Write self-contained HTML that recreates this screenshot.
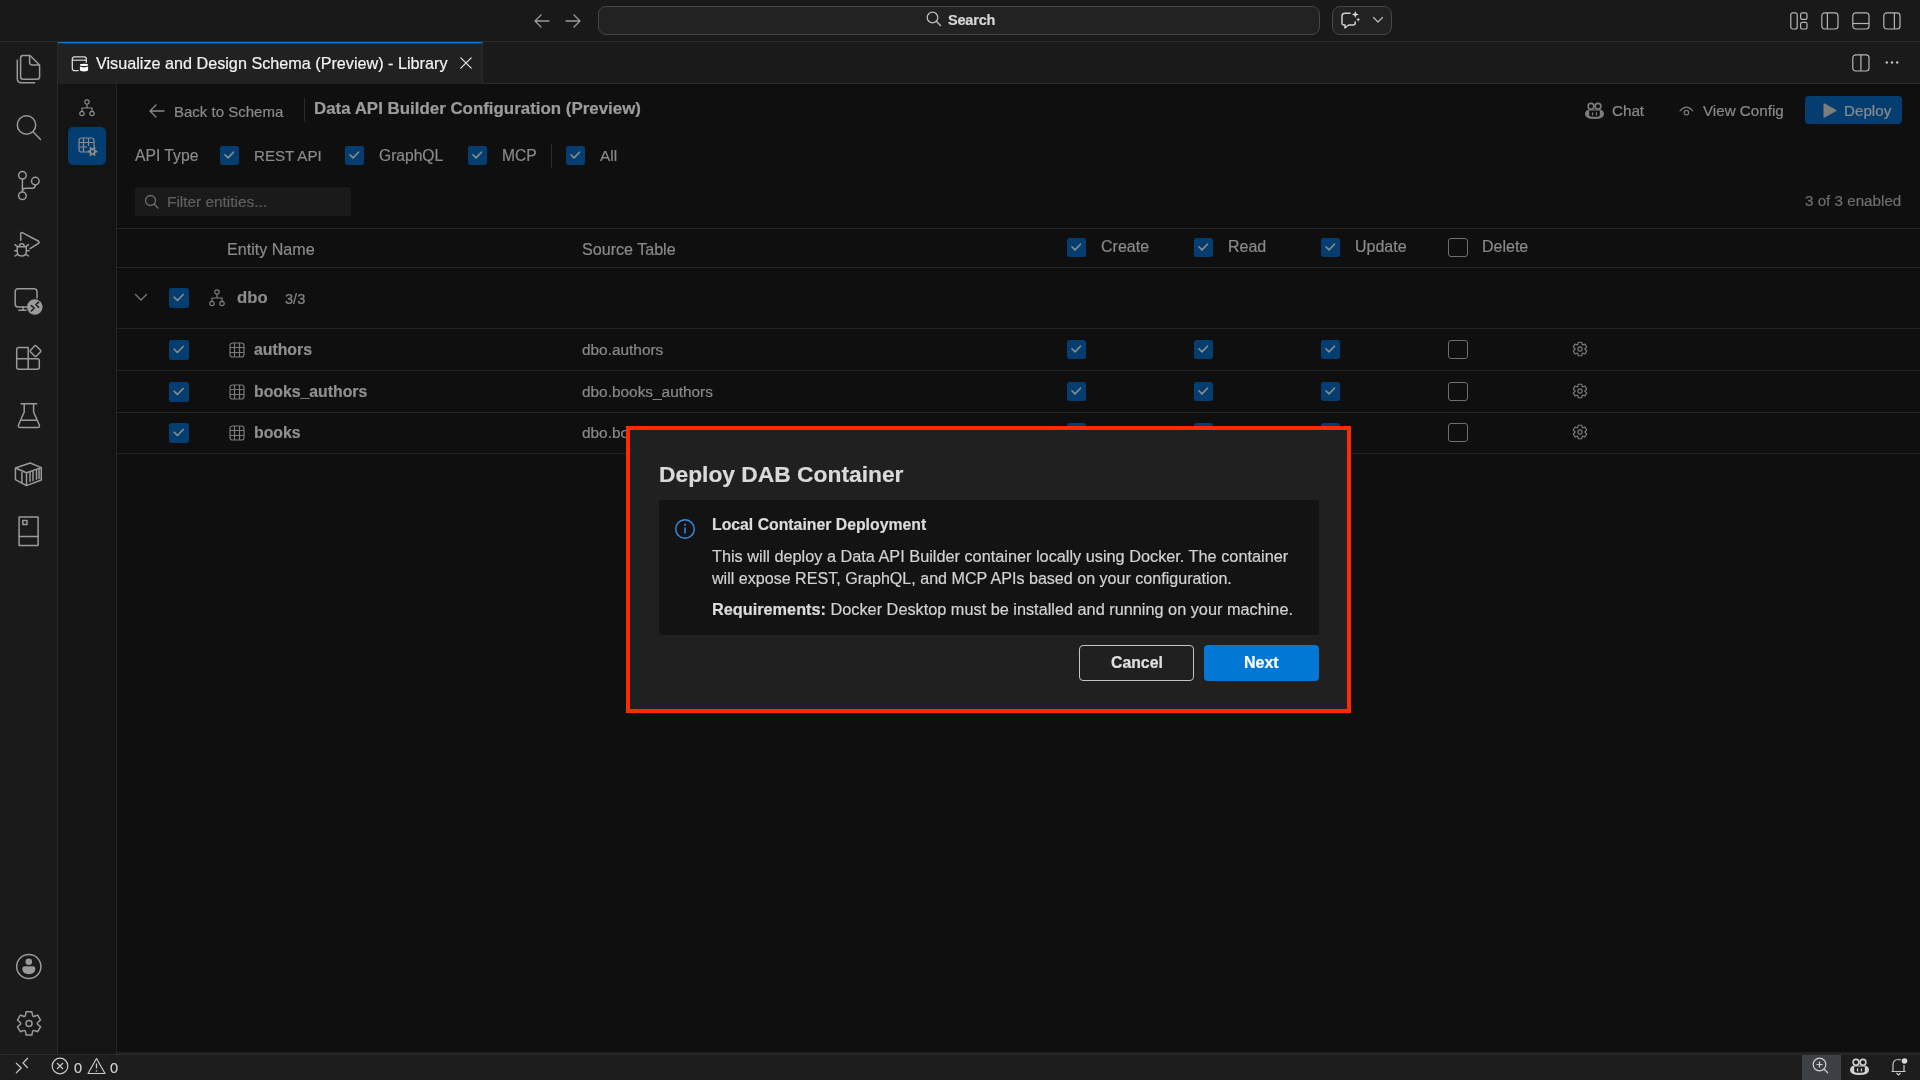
<!DOCTYPE html>
<html><head><meta charset="utf-8">
<style>
*{box-sizing:border-box;margin:0;padding:0}
html,body{width:1920px;height:1080px;overflow:hidden;background:#222222;font-family:"Liberation Sans",sans-serif}
.a{position:absolute}
svg{position:absolute;overflow:visible}
.t{position:absolute;white-space:nowrap;line-height:1;will-change:transform;-webkit-text-stroke:0.2px currentColor}
#title{left:0;top:0;width:1920px;height:42px;background:#191919;border-bottom:1px solid #2a2a2a}
#act{left:0;top:42px;width:58px;height:1012px;background:#1a1a1a;border-right:1px solid #2a2a2a}
#tabs{left:58px;top:42px;width:1862px;height:42px;background:#1a1a1a;border-bottom:1px solid #2a2a2a}
#tab{left:58px;top:42px;width:425px;height:42px;background:#212121;border-top:1px solid #0a78d4;border-right:1px solid #2a2a2a;box-shadow:inset 0 1px 0 rgba(10,120,212,0.35)}
#side{left:58px;top:84px;width:59px;height:970px;background:#141414;border-right:1px solid #262626}
#main{left:117px;top:84px;width:1803px;height:968px;background:#0f0f0f}
#status{left:0;top:1054px;width:1920px;height:26px;background:#1d1d1d;border-top:1px solid #2a2a2a}
.cb{position:absolute;width:19px;height:19px;border-radius:2.5px;background:#043d70}
.cb svg{left:0;top:0}
.cbe{position:absolute;width:20px;height:19px;border-radius:3px;border:1px solid #6e6e6e}
.hl{position:absolute;left:117px;width:1803px;height:1px;background:#242424}
.g{color:#8a8a8a}
</style></head><body>
<div id="title" class="a"></div>
<div id="act" class="a"></div>
<div id="tabs" class="a"></div>
<div id="tab" class="a"></div>
<div id="side" class="a"></div>
<div id="main" class="a"></div>
<div id="status" class="a"></div>
<svg style="left:534px;top:13px;" width="16" height="16" viewBox="0 0 16 16"><path d="M1 8 H15 M7 2 L1 8 L7 14" fill="none" stroke="#9a9a9a" stroke-width="1.3" stroke-linecap="round" stroke-linejoin="round"/></svg>
<svg style="left:565px;top:13px;" width="16" height="16" viewBox="0 0 16 16"><path d="M15 8 H1 M9 2 L15 8 L9 14" fill="none" stroke="#9a9a9a" stroke-width="1.3" stroke-linecap="round" stroke-linejoin="round"/></svg>
<div class="a" style="left:598px;top:6px;width:722px;height:29px;border:1px solid #464646;border-radius:8px;background:#222222"></div>
<svg style="left:926px;top:11px;" width="16" height="16" viewBox="0 0 16 16"><circle cx="6.5" cy="6.5" r="5.3" fill="none" stroke="#bdbdbd" stroke-width="1.3"/><path d="M10.3 10.3 L14.5 14.5" stroke="#bdbdbd" stroke-width="1.4" stroke-linecap="round"/></svg>
<div class="t" style="left:948px;top:12.93px;font-size:14.5px;color:#d6d6d6;font-weight:bold;letter-spacing:-0.2px;">Search</div>
<div class="a" style="left:1332px;top:6px;width:60px;height:29px;border:1px solid #464646;border-radius:8px;background:#222222"></div>
<svg style="left:1340px;top:10px;" width="22" height="20" viewBox="0 0 22 20"><path d="M10.5 3.2 H5 Q2 3.2 2 6.2 V13 Q2 15 4 15 H5 V18 L8.6 15 H13 Q15.2 15 15.2 13 V11.5" fill="none" stroke="#cfcfcf" stroke-width="1.5" stroke-linejoin="round"/><path d="M15.3 1 L16.2 3.6 L18.8 4.5 L16.2 5.4 L15.3 8 L14.4 5.4 L11.8 4.5 L14.4 3.6Z M18.2 7.5 L18.8 9 L20.3 9.6 L18.8 10.2 L18.2 11.7 L17.6 10.2 L16.1 9.6 L17.6 9Z" fill="#dcdcdc"/></svg>
<svg style="left:1372px;top:16px;" width="12" height="8" viewBox="0 0 12 8"><path d="M1.5 1.5 L6 6 L10.5 1.5" fill="none" stroke="#bdbdbd" stroke-width="1.2" stroke-linecap="round" stroke-linejoin="round"/></svg>
<svg style="left:1790px;top:12px;" width="18" height="18" viewBox="0 0 18 18"><rect x="0.8" y="0.8" width="6.4" height="16.2" rx="2" fill="none" stroke="#b5b5b5" stroke-width="1.2"/><rect x="10.6" y="0.8" width="6.4" height="6.6" rx="1.6" fill="none" stroke="#b5b5b5" stroke-width="1.2"/><rect x="10.6" y="10.4" width="6.4" height="6.6" rx="1.6" fill="none" stroke="#b5b5b5" stroke-width="1.2"/></svg>
<svg style="left:1821px;top:12px;" width="18" height="18" viewBox="0 0 18 18"><rect x="0.8" y="0.8" width="16.2" height="16.2" rx="3" fill="none" stroke="#b5b5b5" stroke-width="1.2"/><path d="M6.4 1 V17" fill="none" stroke="#b5b5b5" stroke-width="1.2"/></svg>
<svg style="left:1852px;top:12px;" width="18" height="18" viewBox="0 0 18 18"><rect x="0.8" y="0.8" width="16.2" height="16.2" rx="3" fill="none" stroke="#b5b5b5" stroke-width="1.2"/><path d="M1 11.5 H17" fill="none" stroke="#b5b5b5" stroke-width="1.2"/></svg>
<svg style="left:1883px;top:12px;" width="18" height="18" viewBox="0 0 18 18"><rect x="0.8" y="0.8" width="16.2" height="16.2" rx="3" fill="none" stroke="#b5b5b5" stroke-width="1.2"/><path d="M11.4 1 V17" fill="none" stroke="#b5b5b5" stroke-width="1.2"/></svg>
<svg style="left:71px;top:56px;" width="19" height="18" viewBox="0 0 19 18"><rect x="1.3" y="0.8" width="14" height="13.8" rx="2.2" fill="none" stroke="#dcdcdc" stroke-width="1.3"/><path d="M1.6 4.2 H15" stroke="#dcdcdc" stroke-width="1.2"/><rect x="7.6" y="6.8" width="11" height="11" fill="#212121"/><ellipse cx="13" cy="8.9" rx="4.1" ry="1.1" fill="#ffffff"/><path d="M8.9 10.6 V14.6 Q13 16.6 17.1 14.6 V10.6 Q13 12.2 8.9 10.6Z" fill="#ffffff"/></svg>
<div class="t" style="left:96px;top:55.49px;font-size:16.2px;color:#f2f2f2;">Visualize and Design Schema (Preview) - Library</div>
<svg style="left:459.5px;top:56.5px;" width="12" height="12" viewBox="0 0 12 12"><path d="M0.8 0.8 L11.2 11.2 M11.2 0.8 L0.8 11.2" stroke="#e8e8e8" stroke-width="1.2" stroke-linecap="round"/></svg>
<svg style="left:1852px;top:54px;" width="18" height="18" viewBox="0 0 18 18"><rect x="0.8" y="0.8" width="16.2" height="16.2" rx="3" fill="none" stroke="#b5b5b5" stroke-width="1.2"/><path d="M8.9 1 V17" fill="none" stroke="#b5b5b5" stroke-width="1.2"/></svg>
<svg style="left:1885px;top:60px;" width="15" height="5" viewBox="0 0 15 5"><circle cx="1.8" cy="2.5" r="1.2" fill="#c0c0c0"/><circle cx="7" cy="2.5" r="1.2" fill="#c0c0c0"/><circle cx="12.2" cy="2.5" r="1.2" fill="#c0c0c0"/></svg>
<svg style="left:15px;top:54px;" width="26" height="31" viewBox="0 0 26 31"><path d="M5.6 4 Q5.6 1.5 8.1 1.5 H15 L24.6 11 V22.8 Q24.6 25.3 22.1 25.3 H8.1 Q5.6 25.3 5.6 22.8 Z" fill="none" stroke="#9a9a9a" stroke-width="1.5" stroke-linecap="round" stroke-linejoin="round"/><path d="M14.6 1.8 V8.6 Q14.6 10.9 16.9 10.9 H24.3" fill="none" stroke="#9a9a9a" stroke-width="1.5" stroke-linecap="round" stroke-linejoin="round"/><path d="M2.3 6.3 V24.5 Q2.3 28.8 6.6 28.8 H19.6" fill="none" stroke="#9a9a9a" stroke-width="1.5" stroke-linecap="round" stroke-linejoin="round"/></svg>
<svg style="left:15px;top:114px;" width="28" height="28" viewBox="0 0 28 28"><circle cx="11.5" cy="11" r="9.2" fill="none" stroke="#9a9a9a" stroke-width="1.5" stroke-linecap="round" stroke-linejoin="round"/><path d="M18 17.8 L25.5 25.5" fill="none" stroke="#9a9a9a" stroke-width="1.5" stroke-linecap="round" stroke-linejoin="round"/></svg>
<svg style="left:16px;top:170px;" width="25" height="32" viewBox="0 0 25 32"><circle cx="6.4" cy="5.3" r="3.8" fill="none" stroke="#9a9a9a" stroke-width="1.5" stroke-linecap="round" stroke-linejoin="round"/><circle cx="6.4" cy="25.8" r="3.8" fill="none" stroke="#9a9a9a" stroke-width="1.5" stroke-linecap="round" stroke-linejoin="round"/><circle cx="19.3" cy="11.1" r="3.8" fill="none" stroke="#9a9a9a" stroke-width="1.5" stroke-linecap="round" stroke-linejoin="round"/><path d="M6.4 9.1 V22 M6.4 21.5 Q6.4 18.2 10 18.2 H16.3 Q19.3 18.2 19.3 14.9" fill="none" stroke="#9a9a9a" stroke-width="1.5" stroke-linecap="round" stroke-linejoin="round"/></svg>
<svg style="left:13px;top:231px;" width="28" height="28" viewBox="0 0 28 28"><path d="M7.7 9.3 V3 Q7.7 0.8 9.7 1.8 L25.2 10 Q27.2 11.3 25.2 12.5 L17 17.7" fill="none" stroke="#9a9a9a" stroke-width="1.5" stroke-linecap="round" stroke-linejoin="round"/><path d="M6.3 15.3 Q6.3 12.7 8.75 12.7 Q11.3 12.7 11.3 15.3 M4.2 15.8 H13.3 V20.5 Q13.3 25 8.75 25 Q4.2 25 4.2 20.5 Z M2 13.6 L4.5 15.6 M15.5 13.6 L13 15.6 M1.7 19.7 H4.2 M13.3 19.7 H16 M2 25 L4.5 23.3 M15.5 25 L13 23.3" fill="none" stroke="#9a9a9a" stroke-width="1.5" stroke-linecap="round" stroke-linejoin="round"/></svg>
<svg style="left:13px;top:287px;" width="32" height="29" viewBox="0 0 32 29"><path d="M14 20 H5 Q2.2 20 2.2 17 V4.8 Q2.2 1.8 5 1.8 H21 Q24 1.8 24 4.8 V11" fill="none" stroke="#9a9a9a" stroke-width="1.5" stroke-linecap="round" stroke-linejoin="round"/><path d="M10 20 V23.3 M5.8 23.3 H13" fill="none" stroke="#9a9a9a" stroke-width="1.5" stroke-linecap="round" stroke-linejoin="round"/><circle cx="21.8" cy="20" r="7.8" fill="#9a9a9a"/><path d="M18.3 18.7 L21.3 21 L18.3 24 M25.7 15.2 L22.8 17.5 L25.7 20.3" fill="none" stroke="#1b1b1b" stroke-width="1.5" stroke-linecap="round" stroke-linejoin="round"/></svg>
<svg style="left:15px;top:344px;" width="28" height="28" viewBox="0 0 28 28"><path d="M1.7 14.7 V5.6 Q1.7 3.6 3.7 3.6 H13.2 V25.3 H3.7 Q1.7 25.3 1.7 23.3 Z M1.7 14.7 H22.3 Q24.3 14.7 24.3 16.7 V23.3 Q24.3 25.3 22.3 25.3 H13.2" fill="none" stroke="#9a9a9a" stroke-width="1.5" stroke-linecap="round" stroke-linejoin="round"/><path d="M19.9 1.6 Q20.6 1.4 21.2 2 L25.6 6.4 Q26.2 7.1 25.6 7.8 L21.2 12.2 Q20.5 12.9 19.8 12.2 L15.4 7.8 Q14.8 7.1 15.4 6.4 Z" fill="none" stroke="#9a9a9a" stroke-width="1.5" stroke-linecap="round" stroke-linejoin="round"/></svg>
<svg style="left:16px;top:401px;" width="25" height="29" viewBox="0 0 25 29"><path d="M5.1 2.8 H20.7 M8.2 2.8 V11 L2.6 23.8 Q1.6 26.6 4.4 26.6 H21.4 Q24.2 26.6 23.2 23.8 L17.6 11 V2.8" fill="none" stroke="#9a9a9a" stroke-width="1.5" stroke-linecap="round" stroke-linejoin="round"/><path d="M4.9 19.3 H20.9" fill="none" stroke="#9a9a9a" stroke-width="1.5" stroke-linecap="round" stroke-linejoin="round"/></svg>
<svg style="left:13px;top:460px;" width="31" height="29" viewBox="0 0 31 29"><path d="M2.4 8 L17.2 3 L28.3 7.6 V20 L13.5 25.6 L2.4 19.6 Z M2.4 8 L13.5 12.8 L28.3 7.6 M13.5 12.8 V25.6 M8.9 10.6 V22.8" fill="none" stroke="#9a9a9a" stroke-width="1.5" stroke-linecap="round" stroke-linejoin="round"/><path d="M17 12 V21.5 M20 11 V20.5 M23.5 9.8 V19.3 M26 9 V18.5" fill="none" stroke="#9a9a9a" stroke-width="1.5" stroke-linecap="round" stroke-linejoin="round"/></svg>
<svg style="left:17px;top:508px;" width="23" height="39" viewBox="0 0 23 39"><rect x="2.1" y="9" width="19" height="28.4" fill="none" stroke="#9a9a9a" stroke-width="1.5" stroke-linecap="round" stroke-linejoin="round"/><path d="M2.1 28.6 H21.1" fill="none" stroke="#9a9a9a" stroke-width="1.5" stroke-linecap="round" stroke-linejoin="round"/><rect x="5.8" y="12.4" width="4.2" height="4.1" fill="none" stroke="#9a9a9a" stroke-width="1.5" stroke-linecap="round" stroke-linejoin="round"/></svg>
<svg style="left:15px;top:953px;" width="27" height="27" viewBox="0 0 27 27"><circle cx="13.8" cy="13.5" r="12.1" fill="none" stroke="#9a9a9a" stroke-width="1.5" stroke-linecap="round" stroke-linejoin="round"/><circle cx="13.8" cy="8.7" r="3.3" fill="#9a9a9a"/><path d="M9.8 13.3 H17.8 Q20.3 13.3 20.3 15.5 Q20.3 21.2 13.8 21.2 Q7.3 21.2 7.3 15.5 Q7.3 13.3 9.8 13.3Z" fill="#9a9a9a"/></svg>
<svg style="left:15px;top:1010px;" width="28" height="28" viewBox="0 0 28 28"><path d="M10.62 4.42 L11.15 1.74 L16.85 1.74 L17.38 4.42 Q17.50 7.34 20.09 5.98 L22.67 5.10 L25.52 10.04 L23.47 11.84 Q21.00 13.40 23.47 14.96 L25.52 16.76 L22.67 21.70 L20.09 20.82 Q17.50 19.46 17.38 22.38 L16.85 25.06 L11.15 25.06 L10.62 22.38 Q10.50 19.46 7.91 20.82 L5.33 21.70 L2.48 16.76 L4.53 14.96 Q7.00 13.40 4.53 11.84 L2.48 10.04 L5.33 5.10 L7.91 5.98 Q10.50 7.34 10.62 4.42 Z" fill="none" stroke="#9a9a9a" stroke-width="1.5" stroke-linecap="round" stroke-linejoin="round"/><circle cx="14" cy="13.4" r="3.0" fill="none" stroke="#9a9a9a" stroke-width="1.5" stroke-linecap="round" stroke-linejoin="round"/></svg>
<svg style="left:79px;top:99px;" width="16" height="18" viewBox="0 0 16 18"><circle cx="8" cy="3" r="2.2" fill="none" stroke="#8a8a8a" stroke-width="1.2"/><circle cx="3" cy="14.5" r="2.2" fill="none" stroke="#8a8a8a" stroke-width="1.2"/><circle cx="13" cy="14.5" r="2.2" fill="none" stroke="#8a8a8a" stroke-width="1.2"/><path d="M8 5.2 V9 M3 12.3 V9 H13 V12.3" fill="none" stroke="#8a8a8a" stroke-width="1.2"/></svg>
<div class="a" style="left:68px;top:127px;width:38px;height:38px;border-radius:5px;background:#043d70"></div>
<svg style="left:78px;top:137px;" width="20" height="20" viewBox="0 0 20 20"><rect x="1" y="1" width="15" height="14" rx="2.5" fill="none" stroke="#8c8c8c" stroke-width="1.2"/><path d="M1 5.5 H16 M1 10 H9 M5.5 1 V15 M10.5 1 V9" stroke="#8c8c8c" stroke-width="1.2" fill="none"/><path d="M17.75 13.50 L19.43 13.68 L19.43 15.32 L17.75 15.50 L16.99 16.81 L17.68 18.36 L16.25 19.18 L15.25 17.82 L13.75 17.82 L12.75 19.18 L11.32 18.36 L12.01 16.81 L11.25 15.50 L9.57 15.32 L9.57 13.68 L11.25 13.50 L12.01 12.19 L11.32 10.64 L12.75 9.82 L13.75 11.18 L15.25 11.18 L16.25 9.82 L17.68 10.64 L16.99 12.19 Z" fill="#8c8c8c"/><circle cx="14.5" cy="14.5" r="1.5" fill="#043d70"/></svg>
<svg style="left:149px;top:104px;" width="16" height="14" viewBox="0 0 16 14"><path d="M1 7 H15 M7 1 L1 7 L7 13" fill="none" stroke="#8a8a8a" stroke-width="1.3" stroke-linecap="round" stroke-linejoin="round"/></svg>
<div class="t" style="left:174px;top:104.10px;font-size:15px;color:#8a8a8a;">Back to Schema</div>
<div class="a" style="left:304px;top:98px;width:1px;height:24px;background:#2a2a2a;"></div>
<div class="t" style="left:314px;top:101.49px;font-size:16.9px;color:#9c9c9c;font-weight:bold;">Data API Builder Configuration (Preview)</div>
<svg style="left:1585px;top:102px;" width="19.0" height="17.0" viewBox="0 0 19 17"><circle cx="6" cy="4.3" r="2.9" fill="none" stroke="#7c7c7c" stroke-width="1.6"/><circle cx="13" cy="4.3" r="2.9" fill="none" stroke="#7c7c7c" stroke-width="1.6"/><path fill-rule="evenodd" d="M3.6 7.6 H15.4 Q19 8.6 19 12.3 Q19 17 9.5 17 Q0 17 0 12.3 Q0 8.6 3.6 7.6 Z M4.2 8.4 H14.8 V13.2 Q14.8 14.8 9.5 14.8 Q4.2 14.8 4.2 13.2 Z" fill="#7c7c7c"/><rect x="6.9" y="10.2" width="1.3" height="3.3" rx="0.6" fill="#7c7c7c"/><rect x="10.8" y="10.2" width="1.3" height="3.3" rx="0.6" fill="#7c7c7c"/></svg>
<div class="t" style="left:1612px;top:103.33px;font-size:15.2px;color:#8a8a8a;">Chat</div>
<svg style="left:1678px;top:105px;" width="17" height="11" viewBox="0 0 17 11"><path d="M2 5.8 Q8.4 -1.6 14.8 5.8" fill="none" stroke="#7a7a7a" stroke-width="1.15" stroke-linecap="round"/><circle cx="8.4" cy="7.6" r="2.3" fill="none" stroke="#7a7a7a" stroke-width="1.15"/></svg>
<div class="t" style="left:1703px;top:103.33px;font-size:15.2px;color:#8a8a8a;">View Config</div>
<div class="a" style="left:1805px;top:96px;width:97px;height:28px;border-radius:4px;background:#043d70"></div>
<svg style="left:1821px;top:102px;" width="16" height="17" viewBox="0 0 16 17"><path d="M2.5 2 Q2.5 0.8 3.8 1.5 L15 7.8 Q16 8.5 15 9.2 L3.8 15.5 Q2.5 16.2 2.5 15 Z" fill="#7d7d7d"/></svg>
<div class="t" style="left:1844px;top:103.33px;font-size:15.2px;color:#8a8a8a;">Deploy</div>
<div class="t" style="left:134.5px;top:147.51px;font-size:15.7px;color:#8a8a8a;">API Type</div>
<div class="cb" style="left:220px;top:146px;width:19px;height:19px"><svg width="19" height="19" viewBox="0 0 19 19"><path d="M4.9 8.8 L8 11.9 L13.5 6.2" fill="none" stroke="#8c8c8c" stroke-width="1.6" stroke-linecap="round" stroke-linejoin="round"/></svg></div>
<div class="t" style="left:254px;top:148.02px;font-size:15.1px;color:#8a8a8a;">REST API</div>
<div class="cb" style="left:345px;top:146px;width:19px;height:19px"><svg width="19" height="19" viewBox="0 0 19 19"><path d="M4.9 8.8 L8 11.9 L13.5 6.2" fill="none" stroke="#8c8c8c" stroke-width="1.6" stroke-linecap="round" stroke-linejoin="round"/></svg></div>
<div class="t" style="left:379px;top:147.59px;font-size:15.6px;color:#8a8a8a;">GraphQL</div>
<div class="cb" style="left:468px;top:146px;width:19px;height:19px"><svg width="19" height="19" viewBox="0 0 19 19"><path d="M4.9 8.8 L8 11.9 L13.5 6.2" fill="none" stroke="#8c8c8c" stroke-width="1.6" stroke-linecap="round" stroke-linejoin="round"/></svg></div>
<div class="t" style="left:502px;top:147.59px;font-size:15.6px;color:#8a8a8a;">MCP</div>
<div class="cb" style="left:566px;top:146px;width:19px;height:19px"><svg width="19" height="19" viewBox="0 0 19 19"><path d="M4.9 8.8 L8 11.9 L13.5 6.2" fill="none" stroke="#8c8c8c" stroke-width="1.6" stroke-linecap="round" stroke-linejoin="round"/></svg></div>
<div class="t" style="left:600px;top:147.76px;font-size:15.4px;color:#8a8a8a;">All</div>
<div class="a" style="left:551px;top:144px;width:1px;height:24px;background:#2a2a2a;"></div>
<div class="a" style="left:135px;top:187px;width:216px;height:29px;border-radius:2px;background:#1a1a1a"></div>
<svg style="left:144px;top:194px;" width="16" height="16" viewBox="0 0 16 16"><circle cx="6.5" cy="6.5" r="5" fill="none" stroke="#6a6a6a" stroke-width="1.3"/><path d="M10 10 L14 14" stroke="#6a6a6a" stroke-width="1.4" stroke-linecap="round"/></svg>
<div class="t" style="left:167px;top:194.16px;font-size:15.4px;color:#606060;">Filter entities...</div>
<div class="t" style="right:18.5px;top:193.03px;font-size:15.2px;color:#6e6e6e">3 of 3 enabled</div>
<div class="a" style="left:117px;top:228px;width:1803px;height:1px;background:#232323;"></div>
<div class="a" style="left:117px;top:267px;width:1803px;height:1px;background:#232323;"></div>
<div class="a" style="left:117px;top:328px;width:1803px;height:1px;background:#232323;"></div>
<div class="a" style="left:117px;top:370px;width:1803px;height:1px;background:#232323;"></div>
<div class="a" style="left:117px;top:412px;width:1803px;height:1px;background:#232323;"></div>
<div class="a" style="left:117px;top:453px;width:1803px;height:1px;background:#232323;"></div>
<div class="t" style="left:227px;top:241.07px;font-size:16.1px;color:#8a8a8a;">Entity Name</div>
<div class="t" style="left:582px;top:241.07px;font-size:16.1px;color:#8a8a8a;">Source Table</div>
<div class="cb" style="left:1067px;top:238px;width:19px;height:19px"><svg width="19" height="19" viewBox="0 0 19 19"><path d="M4.9 8.8 L8 11.9 L13.5 6.2" fill="none" stroke="#8c8c8c" stroke-width="1.6" stroke-linecap="round" stroke-linejoin="round"/></svg></div>
<div class="t" style="left:1101px;top:239.26px;font-size:16px;color:#8a8a8a;">Create</div>
<div class="cb" style="left:1194px;top:238px;width:19px;height:19px"><svg width="19" height="19" viewBox="0 0 19 19"><path d="M4.9 8.8 L8 11.9 L13.5 6.2" fill="none" stroke="#8c8c8c" stroke-width="1.6" stroke-linecap="round" stroke-linejoin="round"/></svg></div>
<div class="t" style="left:1228px;top:239.26px;font-size:16px;color:#8a8a8a;">Read</div>
<div class="cb" style="left:1321px;top:238px;width:19px;height:19px"><svg width="19" height="19" viewBox="0 0 19 19"><path d="M4.9 8.8 L8 11.9 L13.5 6.2" fill="none" stroke="#8c8c8c" stroke-width="1.6" stroke-linecap="round" stroke-linejoin="round"/></svg></div>
<div class="t" style="left:1355px;top:239.26px;font-size:16px;color:#8a8a8a;">Update</div>
<div class="cbe" style="left:1448px;top:238px"></div>
<div class="t" style="left:1482px;top:239.26px;font-size:16px;color:#8a8a8a;">Delete</div>
<svg style="left:134px;top:293px;" width="14" height="10" viewBox="0 0 14 10"><path d="M1.5 1.5 L7 7 L12.5 1.5" fill="none" stroke="#7a7a7a" stroke-width="1.3" stroke-linecap="round" stroke-linejoin="round"/></svg>
<div class="cb" style="left:169px;top:288px;width:20px;height:20px"><svg width="20" height="20" viewBox="0 0 19 19"><path d="M4.9 8.8 L8 11.9 L13.5 6.2" fill="none" stroke="#8c8c8c" stroke-width="1.6" stroke-linecap="round" stroke-linejoin="round"/></svg></div>
<svg style="left:209px;top:289px;" width="16" height="18" viewBox="0 0 16 18"><circle cx="8" cy="3" r="2.2" fill="none" stroke="#7e7e7e" stroke-width="1.2"/><circle cx="3" cy="14.5" r="2.2" fill="none" stroke="#7e7e7e" stroke-width="1.2"/><circle cx="13" cy="14.5" r="2.2" fill="none" stroke="#7e7e7e" stroke-width="1.2"/><path d="M8 5.2 V9 M3 12.3 V9 H13 V12.3" fill="none" stroke="#7e7e7e" stroke-width="1.2"/></svg>
<div class="t" style="left:237px;top:290.36px;font-size:16.7px;color:#8c8c8c;font-weight:bold;">dbo</div>
<div class="t" style="left:284.5px;top:292.14px;font-size:14.6px;color:#858585;">3/3</div>
<div class="cb" style="left:169px;top:340px;width:20px;height:20px"><svg width="20" height="20" viewBox="0 0 19 19"><path d="M4.9 8.8 L8 11.9 L13.5 6.2" fill="none" stroke="#8c8c8c" stroke-width="1.6" stroke-linecap="round" stroke-linejoin="round"/></svg></div>
<svg style="left:228.5px;top:342px;" width="16" height="16" viewBox="0 0 16 16"><rect x="1" y="1" width="14" height="14" rx="2.5" fill="none" stroke="#7a7a7a" stroke-width="1.2"/><path d="M1 5.5 H15 M1 10.5 H15 M5.5 1 V15 M10.5 1 V15" fill="none" stroke="#7a7a7a" stroke-width="1.2"/></svg>
<div class="t" style="left:253.5px;top:341.63px;font-size:15.8px;color:#909090;font-weight:bold;">authors</div>
<div class="t" style="left:582px;top:341.96px;font-size:15.4px;color:#8a8a8a;">dbo.authors</div>
<div class="cb" style="left:1067px;top:340px;width:19px;height:19px"><svg width="19" height="19" viewBox="0 0 19 19"><path d="M4.9 8.8 L8 11.9 L13.5 6.2" fill="none" stroke="#8c8c8c" stroke-width="1.6" stroke-linecap="round" stroke-linejoin="round"/></svg></div>
<div class="cb" style="left:1194px;top:340px;width:19px;height:19px"><svg width="19" height="19" viewBox="0 0 19 19"><path d="M4.9 8.8 L8 11.9 L13.5 6.2" fill="none" stroke="#8c8c8c" stroke-width="1.6" stroke-linecap="round" stroke-linejoin="round"/></svg></div>
<div class="cb" style="left:1321px;top:340px;width:19px;height:19px"><svg width="19" height="19" viewBox="0 0 19 19"><path d="M4.9 8.8 L8 11.9 L13.5 6.2" fill="none" stroke="#8c8c8c" stroke-width="1.6" stroke-linecap="round" stroke-linejoin="round"/></svg></div>
<div class="cbe" style="left:1448px;top:340px"></div>
<svg style="left:1572.2px;top:341.3px;" width="16" height="16" viewBox="0 0 16 16"><path d="M5.92 2.80 L6.27 1.22 L9.73 1.22 L10.08 2.80 Q10.00 4.54 11.47 3.60 L13.01 3.11 L14.74 6.11 L13.54 7.20 Q12.00 8.00 13.54 8.80 L14.74 9.89 L13.01 12.89 L11.47 12.40 Q10.00 11.46 10.08 13.20 L9.73 14.78 L6.27 14.78 L5.92 13.20 Q6.00 11.46 4.53 12.40 L2.99 12.89 L1.26 9.89 L2.46 8.80 Q4.00 8.00 2.46 7.20 L1.26 6.11 L2.99 3.11 L4.53 3.60 Q6.00 4.54 5.92 2.80 Z" fill="none" stroke="#7a7a7a" stroke-width="1.15" stroke-linejoin="round"/><circle cx="8" cy="8" r="2.1" fill="none" stroke="#7a7a7a" stroke-width="1.15"/></svg>
<div class="cb" style="left:169px;top:382px;width:20px;height:20px"><svg width="20" height="20" viewBox="0 0 19 19"><path d="M4.9 8.8 L8 11.9 L13.5 6.2" fill="none" stroke="#8c8c8c" stroke-width="1.6" stroke-linecap="round" stroke-linejoin="round"/></svg></div>
<svg style="left:228.5px;top:384px;" width="16" height="16" viewBox="0 0 16 16"><rect x="1" y="1" width="14" height="14" rx="2.5" fill="none" stroke="#7a7a7a" stroke-width="1.2"/><path d="M1 5.5 H15 M1 10.5 H15 M5.5 1 V15 M10.5 1 V15" fill="none" stroke="#7a7a7a" stroke-width="1.2"/></svg>
<div class="t" style="left:253.5px;top:383.63px;font-size:15.8px;color:#909090;font-weight:bold;">books_authors</div>
<div class="t" style="left:582px;top:383.96px;font-size:15.4px;color:#8a8a8a;">dbo.books_authors</div>
<div class="cb" style="left:1067px;top:382px;width:19px;height:19px"><svg width="19" height="19" viewBox="0 0 19 19"><path d="M4.9 8.8 L8 11.9 L13.5 6.2" fill="none" stroke="#8c8c8c" stroke-width="1.6" stroke-linecap="round" stroke-linejoin="round"/></svg></div>
<div class="cb" style="left:1194px;top:382px;width:19px;height:19px"><svg width="19" height="19" viewBox="0 0 19 19"><path d="M4.9 8.8 L8 11.9 L13.5 6.2" fill="none" stroke="#8c8c8c" stroke-width="1.6" stroke-linecap="round" stroke-linejoin="round"/></svg></div>
<div class="cb" style="left:1321px;top:382px;width:19px;height:19px"><svg width="19" height="19" viewBox="0 0 19 19"><path d="M4.9 8.8 L8 11.9 L13.5 6.2" fill="none" stroke="#8c8c8c" stroke-width="1.6" stroke-linecap="round" stroke-linejoin="round"/></svg></div>
<div class="cbe" style="left:1448px;top:382px"></div>
<svg style="left:1572.2px;top:383.3px;" width="16" height="16" viewBox="0 0 16 16"><path d="M5.92 2.80 L6.27 1.22 L9.73 1.22 L10.08 2.80 Q10.00 4.54 11.47 3.60 L13.01 3.11 L14.74 6.11 L13.54 7.20 Q12.00 8.00 13.54 8.80 L14.74 9.89 L13.01 12.89 L11.47 12.40 Q10.00 11.46 10.08 13.20 L9.73 14.78 L6.27 14.78 L5.92 13.20 Q6.00 11.46 4.53 12.40 L2.99 12.89 L1.26 9.89 L2.46 8.80 Q4.00 8.00 2.46 7.20 L1.26 6.11 L2.99 3.11 L4.53 3.60 Q6.00 4.54 5.92 2.80 Z" fill="none" stroke="#7a7a7a" stroke-width="1.15" stroke-linejoin="round"/><circle cx="8" cy="8" r="2.1" fill="none" stroke="#7a7a7a" stroke-width="1.15"/></svg>
<div class="cb" style="left:169px;top:423px;width:20px;height:20px"><svg width="20" height="20" viewBox="0 0 19 19"><path d="M4.9 8.8 L8 11.9 L13.5 6.2" fill="none" stroke="#8c8c8c" stroke-width="1.6" stroke-linecap="round" stroke-linejoin="round"/></svg></div>
<svg style="left:228.5px;top:425px;" width="16" height="16" viewBox="0 0 16 16"><rect x="1" y="1" width="14" height="14" rx="2.5" fill="none" stroke="#7a7a7a" stroke-width="1.2"/><path d="M1 5.5 H15 M1 10.5 H15 M5.5 1 V15 M10.5 1 V15" fill="none" stroke="#7a7a7a" stroke-width="1.2"/></svg>
<div class="t" style="left:253.5px;top:425.13px;font-size:15.8px;color:#909090;font-weight:bold;">books</div>
<div class="t" style="left:582px;top:425.46px;font-size:15.4px;color:#8a8a8a;">dbo.books</div>
<div class="cb" style="left:1067px;top:423px;width:19px;height:19px"><svg width="19" height="19" viewBox="0 0 19 19"><path d="M4.9 8.8 L8 11.9 L13.5 6.2" fill="none" stroke="#8c8c8c" stroke-width="1.6" stroke-linecap="round" stroke-linejoin="round"/></svg></div>
<div class="cb" style="left:1194px;top:423px;width:19px;height:19px"><svg width="19" height="19" viewBox="0 0 19 19"><path d="M4.9 8.8 L8 11.9 L13.5 6.2" fill="none" stroke="#8c8c8c" stroke-width="1.6" stroke-linecap="round" stroke-linejoin="round"/></svg></div>
<div class="cb" style="left:1321px;top:423px;width:19px;height:19px"><svg width="19" height="19" viewBox="0 0 19 19"><path d="M4.9 8.8 L8 11.9 L13.5 6.2" fill="none" stroke="#8c8c8c" stroke-width="1.6" stroke-linecap="round" stroke-linejoin="round"/></svg></div>
<div class="cbe" style="left:1448px;top:423px"></div>
<svg style="left:1572.2px;top:424.3px;" width="16" height="16" viewBox="0 0 16 16"><path d="M5.92 2.80 L6.27 1.22 L9.73 1.22 L10.08 2.80 Q10.00 4.54 11.47 3.60 L13.01 3.11 L14.74 6.11 L13.54 7.20 Q12.00 8.00 13.54 8.80 L14.74 9.89 L13.01 12.89 L11.47 12.40 Q10.00 11.46 10.08 13.20 L9.73 14.78 L6.27 14.78 L5.92 13.20 Q6.00 11.46 4.53 12.40 L2.99 12.89 L1.26 9.89 L2.46 8.80 Q4.00 8.00 2.46 7.20 L1.26 6.11 L2.99 3.11 L4.53 3.60 Q6.00 4.54 5.92 2.80 Z" fill="none" stroke="#7a7a7a" stroke-width="1.15" stroke-linejoin="round"/><circle cx="8" cy="8" r="2.1" fill="none" stroke="#7a7a7a" stroke-width="1.15"/></svg>
<div class="a" style="left:626px;top:426px;width:725px;height:287px;border:4px solid #ff2a00;background:#202020"></div>
<div class="t" style="left:659px;top:462.70px;font-size:22.8px;color:#dadada;font-weight:bold;">Deploy DAB Container</div>
<div class="a" style="left:659px;top:500px;width:660px;height:135px;border-radius:3px;background:#131313"></div>
<svg style="left:674px;top:518px;" width="22" height="22" viewBox="0 0 22 22"><circle cx="11" cy="11" r="9.3" fill="none" stroke="#3a8ee0" stroke-width="1.4"/><circle cx="11" cy="6.8" r="1" fill="#3a8ee0"/><path d="M11 9.5 V15.5" stroke="#3a8ee0" stroke-width="1.5"/></svg>
<div class="t" style="left:711.5px;top:516.63px;font-size:15.8px;color:#dcdcdc;font-weight:bold;">Local Container Deployment</div>
<div class="t" style="left:712px;top:547.90px;font-size:16.3px;color:#d2d2d2;">This will deploy a Data API Builder container locally using Docker. The container</div>
<div class="t" style="left:712px;top:570.09px;font-size:16.08px;color:#d2d2d2;">will expose REST, GraphQL, and MCP APIs based on your configuration.</div>
<div class="t" style="left:712px;top:601.20px;font-size:16.3px;color:#d2d2d2;"><b style="color:#dcdcdc">Requirements:</b> Docker Desktop must be installed and running on your machine.</div>
<div class="a" style="left:1079px;top:645px;width:115px;height:36px;border-radius:4px;border:1px solid #c4c4c4"></div>
<div class="t" style="left:1111px;top:655.23px;font-size:15.8px;color:#e0e0e0;font-weight:bold;">Cancel</div>
<div class="a" style="left:1204px;top:645px;width:115px;height:36px;border-radius:4px;background:#0078d4"></div>
<div class="t" style="left:1244px;top:655.06px;font-size:16px;color:#ffffff;font-weight:bold;">Next</div>
<svg style="left:14px;top:1056px;" width="16" height="20" viewBox="0 0 16 20"><path d="M2 7 L7.2 12 L2 17 M13.8 2 L9 7 L13.8 12" fill="none" stroke="#c8c8c8" stroke-width="1.2"/></svg>
<svg style="left:51px;top:1057px;" width="18" height="18" viewBox="0 0 18 18"><circle cx="9" cy="9" r="7.8" fill="none" stroke="#c8c8c8" stroke-width="1.2"/><path d="M6 6 L12 12 M12 6 L6 12" stroke="#c8c8c8" stroke-width="1.2"/></svg>
<div class="t" style="left:74px;top:1060.73px;font-size:14.5px;color:#d0d0d0;">0</div>
<svg style="left:87px;top:1057px;" width="19" height="18" viewBox="0 0 19 18"><path d="M9.5 1.5 L18 16.5 H1 Z" fill="none" stroke="#c8c8c8" stroke-width="1.2" stroke-linejoin="round"/><path d="M9.5 6.5 V11.5" stroke="#c8c8c8" stroke-width="1.3"/><circle cx="9.5" cy="14" r="0.8" fill="#c8c8c8"/></svg>
<div class="t" style="left:110px;top:1060.73px;font-size:14.5px;color:#d0d0d0;">0</div>
<div class="a" style="left:1802px;top:1055px;width:39px;height:25px;background:#3d4045;"></div>
<svg style="left:1812px;top:1057px;" width="18" height="18" viewBox="0 0 18 18"><circle cx="7.5" cy="7.5" r="6.3" fill="none" stroke="#d0d0d0" stroke-width="1.2"/><path d="M4.5 7.5 H10.5 M7.5 4.5 V10.5 M12 12 L16 16" stroke="#d0d0d0" stroke-width="1.2"/></svg>
<svg style="left:1850px;top:1058px;" width="19.0" height="17.0" viewBox="0 0 19 17"><circle cx="6" cy="4.3" r="2.9" fill="none" stroke="#d0d0d0" stroke-width="1.6"/><circle cx="13" cy="4.3" r="2.9" fill="none" stroke="#d0d0d0" stroke-width="1.6"/><path fill-rule="evenodd" d="M3.6 7.6 H15.4 Q19 8.6 19 12.3 Q19 17 9.5 17 Q0 17 0 12.3 Q0 8.6 3.6 7.6 Z M4.2 8.4 H14.8 V13.2 Q14.8 14.8 9.5 14.8 Q4.2 14.8 4.2 13.2 Z" fill="#d0d0d0"/><rect x="6.9" y="10.2" width="1.3" height="3.3" rx="0.6" fill="#d0d0d0"/><rect x="10.8" y="10.2" width="1.3" height="3.3" rx="0.6" fill="#d0d0d0"/></svg>
<svg style="left:1890px;top:1057px;" width="18" height="19" viewBox="0 0 18 19"><path d="M3 14 V8 Q3 2.5 8.5 2.5 Q10 2.5 11 3 M14 8 V14 M1.5 14.5 H15.5 M6.5 16 L8.5 18 L10.5 16" fill="none" stroke="#c8c8c8" stroke-width="1.2"/><circle cx="14.5" cy="4" r="2.8" fill="#d8d8d8"/></svg>
</body></html>
